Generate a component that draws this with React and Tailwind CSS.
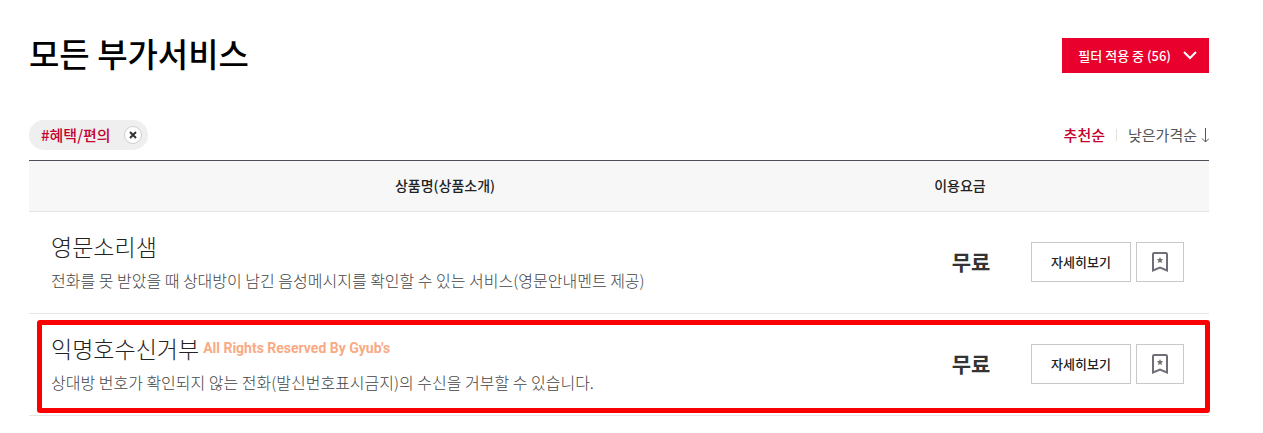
import React from "react";
import clsx from "clsx";

const SERVICES = [
  {
    id: "voice",
    name: "영문소리샘",
    desc: "전화를 못 받았을 때 상대방이 남긴 음성메시지를 확인할 수 있는 서비스(영문안내멘트 제공)",
    fee: "무료",
  },
  {
    id: "anonymous",
    name: "익명호수신거부",
    desc: "상대방 번호가 확인되지 않는 전화(발신번호표시금지)의 수신을 거부할 수 있습니다.",
    fee: "무료",
    note: "All Rights Reserved By Gyub's",
    highlighted: true,
  },
];

function BookmarkIcon() {
  return (
    <svg width="16" height="20" viewBox="0 0 16 20" fill="none" aria-hidden="true">
      <path d="M1 2.2Q1 1 2.2 1h11.6Q15 1 15 2.2v16.2l-7-2.8-7 2.8z" stroke="#6f6f77" strokeWidth="2" />
      <path d="M8 5l.9 2.1 2.3.2-1.7 1.5.5 2.3-2-1.2-2 1.2.5-2.3-1.7-1.5 2.3-.2z" fill="#6f6f77" />
    </svg>
  );
}

function FilterTag({ label }) {
  return (
    <span className="flex h-[30px] items-center gap-[13px] rounded-full bg-[#efefef] pr-1.5 pl-3 text-[15px] font-medium text-[#c4002f]">
      {label}
      <button
        type="button"
        aria-label="삭제"
        className="flex size-[18px] items-center justify-center rounded-full border border-[#cfcfcf] bg-white"
      >
        <svg width="8" height="8" viewBox="0 0 8 8" aria-hidden="true">
          <path d="M1 1l6 6M7 1L1 7" stroke="#333" strokeWidth="2" />
        </svg>
      </button>
    </span>
  );
}

function ServiceRow({ item }) {
  return (
    <tr className={clsx("border-b border-[#e5e5e5]", item.highlighted && "relative")}>
      <td className="h-[102px] pb-1 pl-[22px]">
        <div className="flex items-center gap-1">
          <h2 className="text-[23px] leading-9 font-light text-[#222]">{item.name}</h2>
          {item.note && (
            <span className="font-['Roboto',sans-serif] text-sm font-bold text-[#f9aa84]">{item.note}</span>
          )}
        </div>
        <p className="mt-0.5 text-base leading-7 font-light text-[#444]">{item.desc}</p>
      </td>
      <td className="pb-0.5 pl-[50px] text-center text-[21px] font-bold text-[#333]">{item.fee}</td>
      <td className="pb-0.5">
        <div className="flex gap-[5px]">
          <a
            href="#"
            className="flex h-10 w-[100px] items-center justify-center border border-[#c8c8c8] bg-white text-[13px] font-medium text-[#222]"
          >
            자세히보기
          </a>
          <button
            type="button"
            aria-label="찜하기"
            className="flex h-10 w-12 items-center justify-center border border-[#c8c8c8] bg-white"
          >
            <BookmarkIcon />
          </button>
        </div>
        {item.highlighted && (
          <span className="pointer-events-none absolute top-1.5 -right-px bottom-0.5 left-2 rounded-[3px] border-5 border-[#fb0000]" />
        )}
      </td>
    </tr>
  );
}

export default function App() {
  return (
    <main className="bg-white pt-[30px] pr-[54px] pl-[29px] font-['Noto_Sans_CJK_KR',sans-serif]">
      <header className="flex items-start justify-between">
        <h1 className="text-[33px] leading-[46px] font-medium text-black">모든 부가서비스</h1>
        <button
          type="button"
          className="mt-2 flex h-[35px] items-center gap-3 bg-[#ea002c] pr-3 pl-4 text-[13px] font-medium text-white"
        >
          필터 적용 중 (56)
          <svg width="14" height="9" viewBox="0 0 14 9" fill="none" aria-hidden="true">
            <path d="M1 1l6 6 6-6" stroke="#fff" strokeWidth="2" />
          </svg>
        </button>
      </header>

      <div className="mt-11 flex items-center justify-between pb-2.5">
        <FilterTag label="#혜택/편의" />
        <div className="flex items-center text-[15px] leading-5">
          <button type="button" className="font-medium text-[#c4002f]">추천순</button>
          <span className="mx-[11px] h-3 w-px bg-[#e0e0e0]" />
          <button type="button" className="flex items-center gap-1 text-[#555]">
            낮은가격순
            <svg width="8" height="15" viewBox="0 0 8 15" fill="none" aria-hidden="true">
              <path d="M4.5 0v14M1 10.5L4.5 14 8 10.5" stroke="#555" />
            </svg>
          </button>
        </div>
      </div>

      <table className="w-full table-fixed border-collapse border-t border-[#514b57]">
        <thead>
          <tr className="h-[51px] border-b border-[#e5e5e5] bg-[#f7f7f7] text-sm text-[#222]">
            <th scope="col" className="pb-0.5 font-medium">상품명(상품소개)</th>
            <th scope="col" className="w-[170px] pb-0.5 pl-7 font-medium">이용요금</th>
            <th scope="col" className="w-[178px]" aria-label="신청" />
          </tr>
        </thead>
        <tbody>
          {SERVICES.map((item) => (
            <ServiceRow key={item.id} item={item} />
          ))}
        </tbody>
      </table>
    </main>
  );
}
